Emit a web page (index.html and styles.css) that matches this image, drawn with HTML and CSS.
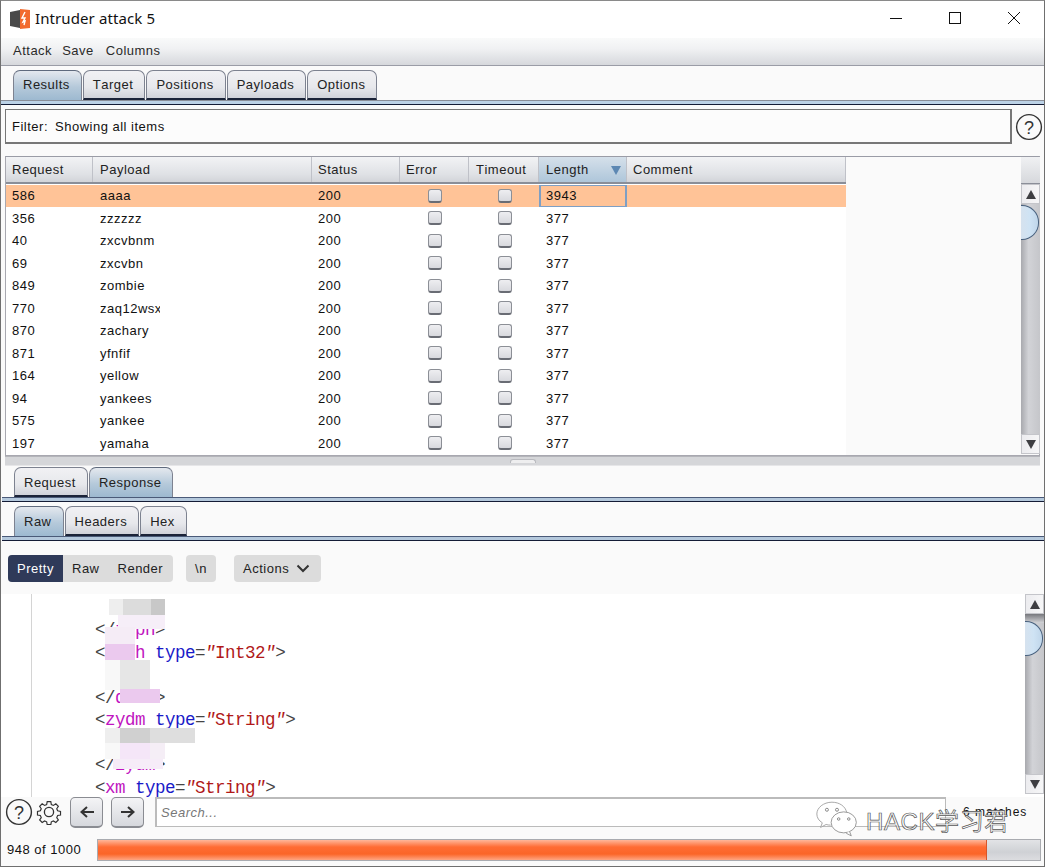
FILE: index.html
```html
<!DOCTYPE html>
<html lang="en">
<head>
<meta charset="utf-8">
<title>Intruder attack 5</title>
<link rel="stylesheet" href="styles.css">
</head>
<body>
<div class="window">
  <header class="titlebar">
    <svg class="logo" width="21" height="20" viewBox="0 0 21 20"><path d="M0 3 L10 1 V19 L0 17Z" fill="#4a4a4a"/><path d="M10 0 L20 1 V19 L10 20Z" fill="#f26a2e"/><path d="M15 3 L12 9 H15 L13 13 L15 12 L14 16" fill="none" stroke="#fff" stroke-width="1.4"/></svg>
    <span class="title">Intruder attack 5</span>
    <div class="winbtns">
      <svg width="14" height="14" viewBox="0 0 14 14"><path d="M1 7.5H13" stroke="#111" stroke-width="1"/></svg>
      <svg width="14" height="14" viewBox="0 0 14 14"><rect x="1.5" y="1.5" width="11" height="11" fill="none" stroke="#111"/></svg>
      <svg width="14" height="14" viewBox="0 0 14 14"><path d="M1 1L13 13M13 1L1 13" stroke="#111" stroke-width="1"/></svg>
    </div>
  </header>
  <nav class="menubar"><span>Attack</span><span>Save</span><span>Columns</span></nav>

  <div class="tabs tabs-main">
    <span class="tab active">Results</span><span class="tab">Target</span><span class="tab">Positions</span><span class="tab">Payloads</span><span class="tab">Options</span>
  </div>
  <div class="strip"></div>

  <div class="filter-row">
    <div class="filter"><span class="filter-label">Filter:</span>Showing all items</div>
    <svg class="help" width="28" height="28" viewBox="0 0 28 28"><circle cx="14" cy="14" r="12.4" fill="none" stroke="#333" stroke-width="1.4"/><text x="14" y="20.5" text-anchor="middle" class="help-q">?</text></svg>
  </div>

  <section class="results">
    <div class="table-wrap">
      <div class="thead">
        <div class="th">Request</div><div class="th">Payload</div><div class="th">Status</div><div class="th">Error</div><div class="th">Timeout</div><div class="th sorted">Length<i class="sort"></i></div><div class="th">Comment</div>
      </div>
      <div class="tbody">
        <div class="row selected"><div class="td">586</div><div class="td">aaaa</div><div class="td">200</div><div class="td c"><i class="cb"></i></div><div class="td c"><i class="cb"></i></div><div class="td focus">3943</div><div class="td"></div></div>
        <div class="row"><div class="td">356</div><div class="td">zzzzzz</div><div class="td">200</div><div class="td c"><i class="cb"></i></div><div class="td c"><i class="cb"></i></div><div class="td">377</div><div class="td"></div></div>
        <div class="row"><div class="td">40</div><div class="td">zxcvbnm</div><div class="td">200</div><div class="td c"><i class="cb"></i></div><div class="td c"><i class="cb"></i></div><div class="td">377</div><div class="td"></div></div>
        <div class="row"><div class="td">69</div><div class="td">zxcvbn</div><div class="td">200</div><div class="td c"><i class="cb"></i></div><div class="td c"><i class="cb"></i></div><div class="td">377</div><div class="td"></div></div>
        <div class="row"><div class="td">849</div><div class="td">zombie</div><div class="td">200</div><div class="td c"><i class="cb"></i></div><div class="td c"><i class="cb"></i></div><div class="td">377</div><div class="td"></div></div>
        <div class="row"><div class="td">770</div><div class="td"><span class="clip">zaq12wsx</span></div><div class="td">200</div><div class="td c"><i class="cb"></i></div><div class="td c"><i class="cb"></i></div><div class="td">377</div><div class="td"></div></div>
        <div class="row"><div class="td">870</div><div class="td">zachary</div><div class="td">200</div><div class="td c"><i class="cb"></i></div><div class="td c"><i class="cb"></i></div><div class="td">377</div><div class="td"></div></div>
        <div class="row"><div class="td">871</div><div class="td">yfnfif</div><div class="td">200</div><div class="td c"><i class="cb"></i></div><div class="td c"><i class="cb"></i></div><div class="td">377</div><div class="td"></div></div>
        <div class="row"><div class="td">164</div><div class="td">yellow</div><div class="td">200</div><div class="td c"><i class="cb"></i></div><div class="td c"><i class="cb"></i></div><div class="td">377</div><div class="td"></div></div>
        <div class="row"><div class="td">94</div><div class="td">yankees</div><div class="td">200</div><div class="td c"><i class="cb"></i></div><div class="td c"><i class="cb"></i></div><div class="td">377</div><div class="td"></div></div>
        <div class="row"><div class="td">575</div><div class="td">yankee</div><div class="td">200</div><div class="td c"><i class="cb"></i></div><div class="td c"><i class="cb"></i></div><div class="td">377</div><div class="td"></div></div>
        <div class="row"><div class="td">197</div><div class="td">yamaha</div><div class="td">200</div><div class="td c"><i class="cb"></i></div><div class="td c"><i class="cb"></i></div><div class="td">377</div><div class="td"></div></div>
      </div>
    </div>
    <div class="sb-col">
      <div class="sb-head"></div>
      <div class="scrollbar sb-table">
        <div class="sb-btn"><i class="up"></i></div>
        <div class="sb-track"><div class="sb-thumb"></div></div>
        <div class="sb-btn"><i class="down"></i></div>
      </div>
    </div>
  </section>

  <div class="splitter"><i></i></div>

  <div class="tabs tabs-sub"><span class="tab">Request</span><span class="tab active">Response</span></div>
  <div class="strip strip-sub"></div>
  <div class="tabs tabs-sub tabs-sub2"><span class="tab active">Raw</span><span class="tab">Headers</span><span class="tab">Hex</span></div>
  <div class="strip strip-sub"></div>

  <div class="viewbar">
    <div class="btn-group"><span class="vbtn on">Pretty</span><span class="vbtn">Raw</span><span class="vbtn">Render</span></div>
    <span class="pill pill-n">\n</span>
    <span class="pill pill-actions">Actions
      <svg width="14" height="9" viewBox="0 0 14 9"><path d="M1.5 1.5L7 7L12.5 1.5" fill="none" stroke="#333" stroke-width="2"/></svg>
    </span>
  </div>

  <section class="editor">
    <div class="gutter"></div>
    <pre class="code"><span> </span>
<span class="p">&lt;/</span><span class="t">zypn</span><span class="p">&gt;</span>
<span class="p">&lt;</span><span class="t">dwdh</span> <span class="a">type</span><span class="p">=</span><span class="v"><em>"</em>Int32<em>"</em></span><span class="p">&gt;</span>
<span> </span>
<span class="p">&lt;/</span><span class="t">dwdh</span><span class="p">&gt;</span>
<span class="p">&lt;</span><span class="t">zydm</span> <span class="a">type</span><span class="p">=</span><span class="v"><em>"</em>String<em>"</em></span><span class="p">&gt;</span>
<span> </span>
<span class="p">&lt;/</span><span class="t">zydm</span><span class="p">&gt;</span>
<span class="p">&lt;</span><span class="t">xm</span> <span class="a">type</span><span class="p">=</span><span class="v"><em>"</em>String<em>"</em></span><span class="p">&gt;</span></pre>
    <div class="scrollbar sb-editor">
      <div class="sb-btn"><i class="up"></i></div>
      <div class="sb-track"><div class="sb-thumb"></div></div>
      <div class="sb-btn"><i class="down"></i></div>
    </div>
    <div class="mosaic m1"></div><div class="mosaic m1b"></div>
    <div class="mosaic m2"></div><div class="mosaic m3"></div><div class="mosaic m4"></div><div class="mosaic m5"></div>
    <div class="mosaic m6"></div><div class="mosaic m7"></div><div class="mosaic m8"></div>
  </section>

  <div class="searchbar">
    <svg width="28" height="28" viewBox="0 0 28 28"><circle cx="14" cy="14" r="12.4" fill="none" stroke="#333" stroke-width="1.4"/><text x="14" y="20.5" text-anchor="middle" class="help-q">?</text></svg>
    <svg class="gear" width="26" height="26" viewBox="0 0 26 26"><path d="M11 1.5h4l.6 3.2 2.3 1 2.7-1.8 2.8 2.8-1.8 2.7 1 2.3 3.2.6v4l-3.2.6-1 2.3 1.8 2.7-2.8 2.8-2.7-1.8-2.3 1-.6 3.2h-4l-.6-3.2-2.3-1-2.7 1.8-2.8-2.8 1.8-2.7-1-2.3-3.2-.6v-4l3.2-.6 1-2.3-1.800-2.700 2.800-2.800 2.700 1.800 2.300-1z" transform="translate(1.3 1.3) scale(.9)" fill="none" stroke="#333" stroke-width="1.3"/><circle cx="13" cy="13" r="4.6" fill="none" stroke="#333" stroke-width="1.3"/></svg>
    <span class="navbtn"><svg width="16" height="14" viewBox="0 0 16 14"><path d="M15 7H3M8 2L2.5 7L8 12" fill="none" stroke="#333" stroke-width="2"/></svg></span>
    <span class="navbtn"><svg width="16" height="14" viewBox="0 0 16 14"><path d="M1 7H13M8 2L13.5 7L8 12" fill="none" stroke="#333" stroke-width="2"/></svg></span>
    <div class="search">Search...</div>
    <span class="matches">6 matches</span>
  </div>

  <footer class="progress-row">
    <span class="count">948 of 1000</span>
    <div class="progress"><div class="fill"></div></div>
  </footer>

  <div class="watermark">
    <svg width="42" height="36" viewBox="0 0 50 42"><path d="M19 1C9 1 1 7.500 1 15c0 4.500 2.500 8 6.500 10.500L5.500 31l6.500-3.500c1.500.5 3.500.8 5.500.8" fill="#fff" stroke="#999" stroke-width="1"/><path d="M19 1c9 0 16 5 17.500 12" fill="#fff" stroke="#999"/><ellipse cx="33" cy="25" rx="15" ry="12.500" fill="#fff" stroke="#888"/><path d="M40 36l2 5-6-3" fill="#fff" stroke="#888"/><circle cx="13" cy="10" r="1.800" fill="none" stroke="#777"/><circle cx="25" cy="10" r="1.800" fill="none" stroke="#777"/><circle cx="27" cy="21" r="1.500" fill="none" stroke="#777"/><circle cx="39" cy="21" r="1.500" fill="none" stroke="#777"/></svg>
    <span class="wm-text">HACK学习君</span>
  </div>
</div>
</body>
</html>
```
FILE: styles.css
```css
* { box-sizing: border-box; }
html, body { margin: 0; padding: 0; }
body { font-family: "Liberation Sans", Arial, sans-serif; font-size: 13px; letter-spacing: .5px; font-kerning: none; color: #111; }
.window { position: relative; width: 1045px; height: 867px; background: #fafafa; border: 1px solid #6f6f6f; border-top-color: #8a8a8a; overflow: hidden; }

/* title + menu */
.titlebar { height: 37px; background: #fff; display: flex; align-items: center; padding: 0 0 4px 9px; }
.logo { flex: none; margin-top: 2px; }
.title { font-family: "Noto Sans", "Open Sans", sans-serif; font-size: 15px; letter-spacing: .1px; margin-left: 4px; color: #111; }
.winbtns { margin-left: auto; display: flex; gap: 45px; padding-right: 23px; margin-top: 1px; align-items: center; }
.winbtns svg { display: block; }
.menubar { height: 28px; display: flex; align-items: center; gap: 10px; padding: 0 0 2px 12px; color: #2a2a2a; background: linear-gradient(#f9fafa, #f0f1f3 40%, #d6d8dc); border-bottom: 1px solid #9a9ca6; }
.menubar span:last-child { margin-left: 2px; }

/* tabs */
.tabs { display: flex; align-items: flex-end; padding-left: 12px; }
.tabs-main { height: 34px; }
.tabs-sub { height: 31px; padding-left: 13px; }
.tabs-sub .tab { padding-top: 2px; }
.tabs-sub2 { margin-top: 3px; }
.tab { height: 30px; display: flex; align-items: center; padding: 0 11px 0 9px; margin-right: 1px; border: 1px solid #7d8290; border-bottom: 2px solid #1b2338; border-radius: 7px 7px 0 0; background: linear-gradient(#f1f1f4, #e7e8ec 60%, #d0d2d9); color: #222; }
.tab.active { background: linear-gradient(#e4e8ee, #b5c9da 55%, #9db9d0); border-bottom: none; border-top-color: #5f6a7d; padding-bottom: 2px; }
.strip { height: 5px; background: #bcd2e6; border-top: 1px solid #8a8e98; border-bottom: 1px solid #141c36; }
.strip-sub { margin-left: 1px; border-top-color: #4a5a78; background: #b4c8dc; }

/* filter */
.filter-row { display: flex; align-items: center; padding: 4px 1px 0 4px; height: 39px; gap: 3px; }
.filter { flex: 1; height: 35px; background: #fcfcfc; border: 1px solid #777; border-bottom-width: 2px; border-right-width: 2px; display: flex; align-items: center; padding-left: 6px; white-space: nowrap; }
.filter-label { margin-right: 7px; }
.help { flex: none; }
.help-q { font-family: "Liberation Sans", sans-serif; font-size: 18px; fill: #333; letter-spacing: 0; }

/* results table */
.results { display: flex; margin: 12px 4px 0 4px; height: 300px; border: 1px solid #a8a8b0; border-top-color: #9a9ca6; background: #fafafa; }
.table-wrap { width: 840px; flex: none; }
.sb-col { margin-left: 175px; width: 19px; }
.sb-head { height: 27px; background: linear-gradient(#f0f1f3, #d6d8dc); border-bottom: 1px solid #8a8e98; }
.thead, .row { display: grid; grid-template-columns: 87px 219px 88px 69px 70px 88px 219px; }
.thead { height: 27px; border-bottom: 2px solid #8a8e98; }
.th { display: flex; align-items: center; padding-left: 6px; background: linear-gradient(#f2f3f5, #dfe1e5 70%, #d2d4d9); border-right: 1px solid #bfc1c8; color: #222; position: relative; }
.th.sorted { background: linear-gradient(#d5e0ea, #aec6da); }
.sort { position: absolute; right: 5px; top: 9px; width: 0; height: 0; border-left: 5px solid transparent; border-right: 5px solid transparent; border-top: 9px solid #5d88b3; }
.tbody { background: #fff; height: 271px; padding-top: .5px; }
.row { height: 22.5px; }
.td { display: flex; align-items: center; padding-left: 6px; white-space: nowrap; overflow: hidden; color: #111; }
.th:nth-child(2), .td:nth-child(2), .th:nth-child(5), .th:nth-child(6), .td:nth-child(6) { padding-left: 7px; }
.td.c { justify-content: center; padding-left: 0; }
.td.c:nth-child(5) { padding-left: 2px; }
.row.selected { background: #ffc397; }
.td.focus { border: 1px solid #7e9fc4; border-width: 1px 2px; padding-left: 5px; }
.clip { display: inline-block; width: 60px; overflow: hidden; }
.cb { display: block; width: 14px; height: 14px; border-radius: 3px; border: 1px solid #8c8f96; border-bottom: 2px solid #696c74; background: linear-gradient(#eeeef1, #d8d9de); }

/* scrollbars */
.scrollbar { display: flex; flex-direction: column; width: 19px; background: #fafafa; }
.sb-table { height: 270px; }
.sb-editor { position: absolute; top: 0; right: 0; height: 200px; }
.sb-btn { height: 20px; flex: none; display: flex; align-items: center; justify-content: center; background: linear-gradient(90deg, #ececef, #f6f6f7); border: 1px solid #c4c5ca; }
.up { border-left: 5px solid transparent; border-right: 5px solid transparent; border-bottom: 9px solid #3e3e42; }
.down { border-left: 5px solid transparent; border-right: 5px solid transparent; border-top: 9px solid #3e3e42; }
.sb-track { flex: 1; background: linear-gradient(90deg, #a8a9ae, #d2d3d7 40%, #c5c6ca); position: relative; }
.sb-thumb { position: absolute; left: 0; top: 1px; width: 18px; height: 35px; background: linear-gradient(90deg, #d6e2ee, #cfe3f4 50%, #c0d6ea); border: 1.5px solid #48617e; border-left: none; border-radius: 0 17px 17px 0; }
.sb-editor .sb-track { background: linear-gradient(#77787d, #d2d3d7 9px, transparent 9px), linear-gradient(90deg, #a8a9ae, #d2d3d7 40%, #c5c6ca); }
.sb-editor .sb-thumb { top: 7px; }

/* splitter */
.splitter { height: 10px; margin: 0 4px; background: #d5d6d9; border-top: 1px solid #b4b5ba; border-bottom: 1px solid #e6e6e8; display: flex; justify-content: center; }
.splitter i { width: 26px; height: 4px; margin-top: 2px; background: #eeeeef; border: 1px solid #b8b9be; border-bottom: none; border-radius: 3px 3px 0 0; }

/* viewer toolbar */
.viewbar { height: 53px; display: flex; align-items: center; padding: 1px 0 0 7px; }
.btn-group { display: flex; height: 27px; background: #dcdcdc; border-radius: 4px; overflow: hidden; margin-right: 13px; width: 165px; }
.vbtn { display: flex; align-items: center; color: #222; padding-left: 9px; margin-right: 9px; }
.vbtn.on { background: #2f3a59; color: #fff; width: 55px; justify-content: center; padding: 0; margin: 0; }
.pill { height: 27px; display: flex; align-items: center; background: #dcdcdc; border-radius: 4px; color: #222; }
.pill-n { width: 30px; justify-content: center; margin-right: 18px; }
.pill-actions { width: 87px; padding-left: 9px; gap: 7px; }

/* editor */
.editor { position: relative; height: 203px; background: #fff; overflow: hidden; padding-left: 30px; }
.gutter { position: absolute; left: 30px; top: 0; bottom: 0; width: 1px; background: #d4d4d4; }
.code { margin: 0; padding: 2.5px 0 0 64px; font-family: "Liberation Mono", monospace; font-size: 17.5px; letter-spacing: -.5px; line-height: 22.5px; font-kerning: none; }
.code .p { color: #444; }
.code .t { color: #c014c0; }
.code .a { color: #1a1ac8; }
.code .v { color: #b01818; }
.code em { font-style: italic; }
.mosaic { position: absolute; }
.m1 { left: 108px; top: 5px; width: 56px; height: 16px; background: linear-gradient(90deg, #eeeeee 25%, #dcdcdc 25% 75%, #c8c8c8 75%); }
.m1b { left: 117px; top: 21px; width: 47px; height: 14px; background: #f6eef8; }
.m2 { left: 104px; top: 33px; width: 30px; height: 17px; background: #f5ecf6; }
.m3 { left: 104px; top: 50px; width: 30px; height: 16px; background: #ebc9ee; }
.m4 { left: 104px; top: 66px; width: 45px; height: 30px; background: linear-gradient(90deg, #f8f8f8 33%, #e6e6e6 33%); }
.m5 { left: 119px; top: 95px; width: 40px; height: 14px; background: #ebc9ee; }
.m6 { left: 104px; top: 134px; width: 90px; height: 15px; background: linear-gradient(90deg, #eeeeee 17%, #d0d0d0 17% 50%, #dedede 50%); }
.m7 { left: 104px; top: 149px; width: 60px; height: 16px; background: linear-gradient(90deg, #f8f8f8 25%, #f5e6f8 25% 75%, #f5eef6 75%); }
.m8 { left: 112px; top: 165px; width: 50px; height: 10px; background: #f6ecf8; }

/* search + progress */
.searchbar { height: 30px; display: flex; align-items: center; padding-left: 4px; background: #fafafa; }
.gear { margin-left: 3px; }
.navbtn { width: 33px; height: 31px; margin-left: 8px; display: flex; align-items: center; justify-content: center; border: 1px solid #8a8c92; border-bottom-width: 2px; border-radius: 5px; background: linear-gradient(#f4f4f6, #d6d8dd); }
.search { width: 791px; height: 30px; margin-left: 11px; background: #fff; border: 2px solid #bbb; border-right-width: 1px; border-bottom-width: 1px; display: flex; align-items: center; padding-left: 4px; font-style: italic; color: #777; }
.matches { margin-left: 17px; font-size: 12px; letter-spacing: 1px; white-space: nowrap; color: #111; }
.progress-row { height: 38px; display: flex; align-items: center; padding: 7px 3px 0 6px; }
.count { width: 90px; flex: none; white-space: nowrap; }
.progress { flex: 1; height: 22px; background: linear-gradient(#e2e3e6, #cfd1d5 60%, #dcdde0); border: 1px solid #a9abb0; }
.fill { width: 889px; height: 100%; background: linear-gradient(#ffb79a, #ff6c34 35%, #fb6528 70%, #ffa582); border-right: 1px solid #d8562a; }

/* watermark */
.watermark { position: absolute; left: 815px; top: 800px; display: flex; align-items: center; gap: 8px; pointer-events: none; }
.wm-text { font-family: "Liberation Sans", "Noto Sans CJK SC", sans-serif; font-size: 24px; letter-spacing: .6px; color: rgba(255,255,255,.8); -webkit-text-stroke: .7px #555; white-space: nowrap; }
```
